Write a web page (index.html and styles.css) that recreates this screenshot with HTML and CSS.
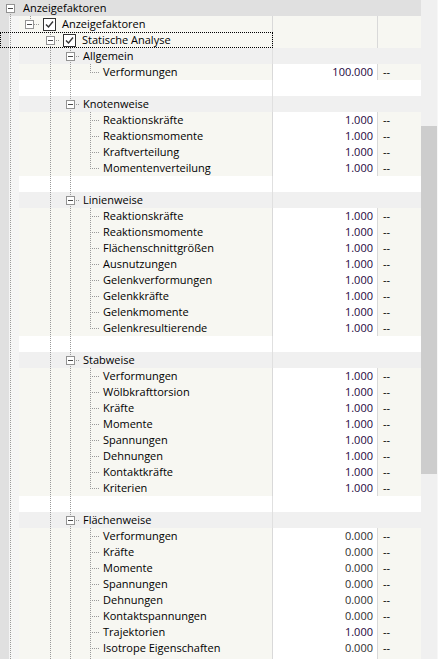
FILE: index.html
```html
<!DOCTYPE html>
<html>
<head>
<meta charset="utf-8">
<link rel="stylesheet" href="styles.css">
</head>
<body>
<div class="wrap">
  <div class="tree">
    <div class="row r0"><div class="name"><span class="g dn"><i class="box"></i></span><span class="t">Anzeigefaktoren</span></div><div class="val"></div><div class="unit"></div></div>
    <div class="row top"><div class="name"><span class="g up dn"></span><span class="g up rt n1"><i class="box"></i></span><span class="cb"><svg width="11" height="11" viewBox="0 0 11 11"><path d="M2 5.5 L4.5 8 L9 2.5" fill="none" stroke="#333" stroke-width="1.4"/></svg></span><span class="tc">Anzeigefaktoren</span></div><div class="val"></div><div class="unit"></div></div>
    <div class="row top focus"><div class="name"><span class="g up dn"></span><span class="g"></span><span class="g up dn rt"><i class="box"></i></span><span class="cb"><svg width="11" height="11" viewBox="0 0 11 11"><path d="M2 5.5 L4.5 8 L9 2.5" fill="none" stroke="#333" stroke-width="1.4"/></svg></span><span class="tc">Statische Analyse</span></div><div class="val"></div><div class="unit"></div></div>

    <div class="row cat"><div class="name"><span class="g up dn"></span><span class="g"></span><span class="g up dn"></span><span class="g up dn rt"><i class="box"></i></span><span class="t">Allgemein</span></div><div class="val"></div><div class="unit"></div></div>
    <div class="row item"><div class="name"><span class="g up dn"></span><span class="g"></span><span class="g up dn"></span><span class="g up dn"></span><span class="g up rt"></span><span class="t">Verformungen</span></div><div class="val one">100.000</div><div class="unit">--</div></div>
    <div class="row blank"><div class="name"><span class="g up dn"></span><span class="g"></span><span class="g up dn"></span><span class="g up dn"></span></div><div class="val"></div><div class="unit"></div></div>

    <div class="row cat"><div class="name"><span class="g up dn"></span><span class="g"></span><span class="g up dn"></span><span class="g up dn rt"><i class="box"></i></span><span class="t">Knotenweise</span></div><div class="val"></div><div class="unit"></div></div>
    <div class="row item"><div class="name"><span class="g up dn"></span><span class="g"></span><span class="g up dn"></span><span class="g up dn"></span><span class="g up dn rt"></span><span class="t">Reaktionskräfte</span></div><div class="val one">1.000</div><div class="unit">--</div></div>
    <div class="row item"><div class="name"><span class="g up dn"></span><span class="g"></span><span class="g up dn"></span><span class="g up dn"></span><span class="g up dn rt"></span><span class="t">Reaktionsmomente</span></div><div class="val one">1.000</div><div class="unit">--</div></div>
    <div class="row item"><div class="name"><span class="g up dn"></span><span class="g"></span><span class="g up dn"></span><span class="g up dn"></span><span class="g up dn rt"></span><span class="t">Kraftverteilung</span></div><div class="val one">1.000</div><div class="unit">--</div></div>
    <div class="row item"><div class="name"><span class="g up dn"></span><span class="g"></span><span class="g up dn"></span><span class="g up dn"></span><span class="g up rt"></span><span class="t">Momentenverteilung</span></div><div class="val one">1.000</div><div class="unit">--</div></div>
    <div class="row blank"><div class="name"><span class="g up dn"></span><span class="g"></span><span class="g up dn"></span><span class="g up dn"></span></div><div class="val"></div><div class="unit"></div></div>

    <div class="row cat"><div class="name"><span class="g up dn"></span><span class="g"></span><span class="g up dn"></span><span class="g up dn rt"><i class="box"></i></span><span class="t">Linienweise</span></div><div class="val"></div><div class="unit"></div></div>
    <div class="row item"><div class="name"><span class="g up dn"></span><span class="g"></span><span class="g up dn"></span><span class="g up dn"></span><span class="g up dn rt"></span><span class="t">Reaktionskräfte</span></div><div class="val one">1.000</div><div class="unit">--</div></div>
    <div class="row item"><div class="name"><span class="g up dn"></span><span class="g"></span><span class="g up dn"></span><span class="g up dn"></span><span class="g up dn rt"></span><span class="t">Reaktionsmomente</span></div><div class="val one">1.000</div><div class="unit">--</div></div>
    <div class="row item"><div class="name"><span class="g up dn"></span><span class="g"></span><span class="g up dn"></span><span class="g up dn"></span><span class="g up dn rt"></span><span class="t">Flächenschnittgrößen</span></div><div class="val one">1.000</div><div class="unit">--</div></div>
    <div class="row item"><div class="name"><span class="g up dn"></span><span class="g"></span><span class="g up dn"></span><span class="g up dn"></span><span class="g up dn rt"></span><span class="t">Ausnutzungen</span></div><div class="val one">1.000</div><div class="unit">--</div></div>
    <div class="row item"><div class="name"><span class="g up dn"></span><span class="g"></span><span class="g up dn"></span><span class="g up dn"></span><span class="g up dn rt"></span><span class="t">Gelenkverformungen</span></div><div class="val one">1.000</div><div class="unit">--</div></div>
    <div class="row item"><div class="name"><span class="g up dn"></span><span class="g"></span><span class="g up dn"></span><span class="g up dn"></span><span class="g up dn rt"></span><span class="t">Gelenkkräfte</span></div><div class="val one">1.000</div><div class="unit">--</div></div>
    <div class="row item"><div class="name"><span class="g up dn"></span><span class="g"></span><span class="g up dn"></span><span class="g up dn"></span><span class="g up dn rt"></span><span class="t">Gelenkmomente</span></div><div class="val one">1.000</div><div class="unit">--</div></div>
    <div class="row item"><div class="name"><span class="g up dn"></span><span class="g"></span><span class="g up dn"></span><span class="g up dn"></span><span class="g up rt"></span><span class="t">Gelenkresultierende</span></div><div class="val one">1.000</div><div class="unit">--</div></div>
    <div class="row blank"><div class="name"><span class="g up dn"></span><span class="g"></span><span class="g up dn"></span><span class="g up dn"></span></div><div class="val"></div><div class="unit"></div></div>

    <div class="row cat"><div class="name"><span class="g up dn"></span><span class="g"></span><span class="g up dn"></span><span class="g up dn rt"><i class="box"></i></span><span class="t">Stabweise</span></div><div class="val"></div><div class="unit"></div></div>
    <div class="row item"><div class="name"><span class="g up dn"></span><span class="g"></span><span class="g up dn"></span><span class="g up dn"></span><span class="g up dn rt"></span><span class="t">Verformungen</span></div><div class="val one">1.000</div><div class="unit">--</div></div>
    <div class="row item"><div class="name"><span class="g up dn"></span><span class="g"></span><span class="g up dn"></span><span class="g up dn"></span><span class="g up dn rt"></span><span class="t">Wölbkrafttorsion</span></div><div class="val one">1.000</div><div class="unit">--</div></div>
    <div class="row item"><div class="name"><span class="g up dn"></span><span class="g"></span><span class="g up dn"></span><span class="g up dn"></span><span class="g up dn rt"></span><span class="t">Kräfte</span></div><div class="val one">1.000</div><div class="unit">--</div></div>
    <div class="row item"><div class="name"><span class="g up dn"></span><span class="g"></span><span class="g up dn"></span><span class="g up dn"></span><span class="g up dn rt"></span><span class="t">Momente</span></div><div class="val one">1.000</div><div class="unit">--</div></div>
    <div class="row item"><div class="name"><span class="g up dn"></span><span class="g"></span><span class="g up dn"></span><span class="g up dn"></span><span class="g up dn rt"></span><span class="t">Spannungen</span></div><div class="val one">1.000</div><div class="unit">--</div></div>
    <div class="row item"><div class="name"><span class="g up dn"></span><span class="g"></span><span class="g up dn"></span><span class="g up dn"></span><span class="g up dn rt"></span><span class="t">Dehnungen</span></div><div class="val one">1.000</div><div class="unit">--</div></div>
    <div class="row item"><div class="name"><span class="g up dn"></span><span class="g"></span><span class="g up dn"></span><span class="g up dn"></span><span class="g up dn rt"></span><span class="t">Kontaktkräfte</span></div><div class="val one">1.000</div><div class="unit">--</div></div>
    <div class="row item"><div class="name"><span class="g up dn"></span><span class="g"></span><span class="g up dn"></span><span class="g up dn"></span><span class="g up rt"></span><span class="t">Kriterien</span></div><div class="val one">1.000</div><div class="unit">--</div></div>
    <div class="row blank"><div class="name"><span class="g up dn"></span><span class="g"></span><span class="g up dn"></span><span class="g up dn"></span></div><div class="val"></div><div class="unit"></div></div>

    <div class="row cat"><div class="name"><span class="g up dn"></span><span class="g"></span><span class="g up dn"></span><span class="g up dn rt"><i class="box"></i></span><span class="t">Flächenweise</span></div><div class="val"></div><div class="unit"></div></div>
    <div class="row item"><div class="name"><span class="g up dn"></span><span class="g"></span><span class="g up dn"></span><span class="g up dn"></span><span class="g up dn rt"></span><span class="t">Verformungen</span></div><div class="val zero">0.000</div><div class="unit">--</div></div>
    <div class="row item"><div class="name"><span class="g up dn"></span><span class="g"></span><span class="g up dn"></span><span class="g up dn"></span><span class="g up dn rt"></span><span class="t">Kräfte</span></div><div class="val zero">0.000</div><div class="unit">--</div></div>
    <div class="row item"><div class="name"><span class="g up dn"></span><span class="g"></span><span class="g up dn"></span><span class="g up dn"></span><span class="g up dn rt"></span><span class="t">Momente</span></div><div class="val zero">0.000</div><div class="unit">--</div></div>
    <div class="row item"><div class="name"><span class="g up dn"></span><span class="g"></span><span class="g up dn"></span><span class="g up dn"></span><span class="g up dn rt"></span><span class="t">Spannungen</span></div><div class="val zero">0.000</div><div class="unit">--</div></div>
    <div class="row item"><div class="name"><span class="g up dn"></span><span class="g"></span><span class="g up dn"></span><span class="g up dn"></span><span class="g up dn rt"></span><span class="t">Dehnungen</span></div><div class="val zero">0.000</div><div class="unit">--</div></div>
    <div class="row item"><div class="name"><span class="g up dn"></span><span class="g"></span><span class="g up dn"></span><span class="g up dn"></span><span class="g up dn rt"></span><span class="t">Kontaktspannungen</span></div><div class="val zero">0.000</div><div class="unit">--</div></div>
    <div class="row item"><div class="name"><span class="g up dn"></span><span class="g"></span><span class="g up dn"></span><span class="g up dn"></span><span class="g up dn rt"></span><span class="t">Trajektorien</span></div><div class="val one">1.000</div><div class="unit">--</div></div>
    <div class="row item"><div class="name"><span class="g up dn"></span><span class="g"></span><span class="g up dn"></span><span class="g up dn"></span><span class="g up dn rt"></span><span class="t">Isotrope Eigenschaften</span></div><div class="val zero">0.000</div><div class="unit">--</div></div>
    <div class="row item"><div class="name"><span class="g up dn"></span><span class="g"></span><span class="g up dn"></span><span class="g up dn"></span><span class="g up dn rt"></span></div><div class="val"></div><div class="unit"></div></div>
  </div>
  <div class="scroll"><div class="thumb"></div></div>
</div>
</body>
</html>
```

FILE: styles.css
```css
html, body {
  margin: 0;
  padding: 0;
  background: #ffffff;
}

.wrap {
  display: flex;
  width: 438px;
  height: 659px;
  overflow: hidden;
  font-family: "Open Sans", "Noto Sans", sans-serif;
  font-size: 11px;
  color: #000000;
}

.tree {
  width: 421px;
  flex: none;
  display: flex;
  flex-direction: column;
}

.row {
  display: flex;
  height: 16px;
  line-height: 16px;
  flex: none;
}

.name {
  display: flex;
  align-items: center;
  width: 273px;
  box-sizing: border-box;
  border-right: 1px solid #d9d9d9;
  background: linear-gradient(to right, #e0e0e0 0 9px, #f5f5f5 9px 19px, #f7f7f2 19px);
  white-space: nowrap;
  overflow: hidden;
}

.val {
  width: 105px;
  box-sizing: border-box;
  border-right: 1px solid #d9d9d9;
  text-align: right;
  padding-right: 4px;
  background: #ffffff;
}

.unit {
  width: 43px;
  box-sizing: border-box;
  padding-left: 5px;
  background: #f7f7f2;
}

.one { color: #240640; }
.zero { color: #2e2e2e; }

/* row variants */
.r0 .name, .r0 .val, .r0 .unit {
  background: #e0e0e0;
  border-right-color: transparent;
}

.top .val { background: #f7f7f2; }

.cat .name {
  background: linear-gradient(to right, #e0e0e0 0 9px, #f5f5f5 9px 19px, #f0f0f0 19px);
  border-right-color: transparent;
}
.cat .val, .cat .unit {
  background: #f0f0f0;
  border-right-color: transparent;
}

.blank .name {
  background: linear-gradient(to right, #e0e0e0 0 9px, #f5f5f5 9px 19px, #ffffff 19px);
  border-right-color: transparent;
}
.blank .val, .blank .unit {
  background: #ffffff;
  border-right-color: transparent;
}

.focus .name {
  outline: 1px dotted #000000;
  outline-offset: -1px;
}

/* tree guides */
.g {
  flex: none;
  display: grid;
  grid-template-columns: 10px 10px;
  grid-template-rows: 8px 8px;
  width: 20px;
  height: 16px;
}
.g::before {
  content: "";
  grid-area: 1 / 2 / 2 / 3;
}
.g::after {
  content: "";
  grid-area: 2 / 2 / 3 / 3;
}
.g.up::before {
  background: linear-gradient(#9a9a9a 50%, transparent 50%) 0 0 / 1px 2px repeat-y;
}
.g.dn::after {
  background: linear-gradient(#9a9a9a 50%, transparent 50%) 0 0 / 1px 2px repeat-y;
}
.g.rt::after {
  background: linear-gradient(to right, #9a9a9a 50%, transparent 50%) 0 0 / 2px 1px repeat-x;
}
.g.dn.rt::after {
  background:
    linear-gradient(#9a9a9a 50%, transparent 50%) 0 0 / 1px 2px repeat-y,
    linear-gradient(to right, #9a9a9a 50%, transparent 50%) 0 0 / 2px 1px repeat-x;
}

.box {
  grid-area: 1 / 1 / 3 / 3;
  z-index: 1;
  align-self: start;
  justify-self: start;
  width: 9px;
  height: 9px;
  margin: 4px 0 0 6px;
  box-sizing: border-box;
  border: 1px solid #939393;
  background: #ffffff;
  display: flex;
  align-items: center;
  justify-content: center;
}
.box::before {
  content: "";
  width: 5px;
  height: 1px;
  background: #4a4a4a;
}
.n1 .box { margin-left: 5px; }

.cb {
  flex: none;
  width: 13px;
  height: 13px;
  box-sizing: border-box;
  border: 1px solid #333333;
  background: #ffffff;
  margin: 0 6px 0 3px;
  display: flex;
  align-items: center;
  justify-content: center;
}
.cb svg { display: block; }

.t { margin-left: 3px; }

/* scrollbar */
.scroll {
  width: 16px;
  flex: none;
  height: 659px;
  background: #f0f0f0;
  border-right: 1px solid #f7f7f7;
  padding-top: 126px;
  box-sizing: content-box;
}
.thumb {
  width: 16px;
  height: 348px;
  background: #cdcdcd;
}
```
